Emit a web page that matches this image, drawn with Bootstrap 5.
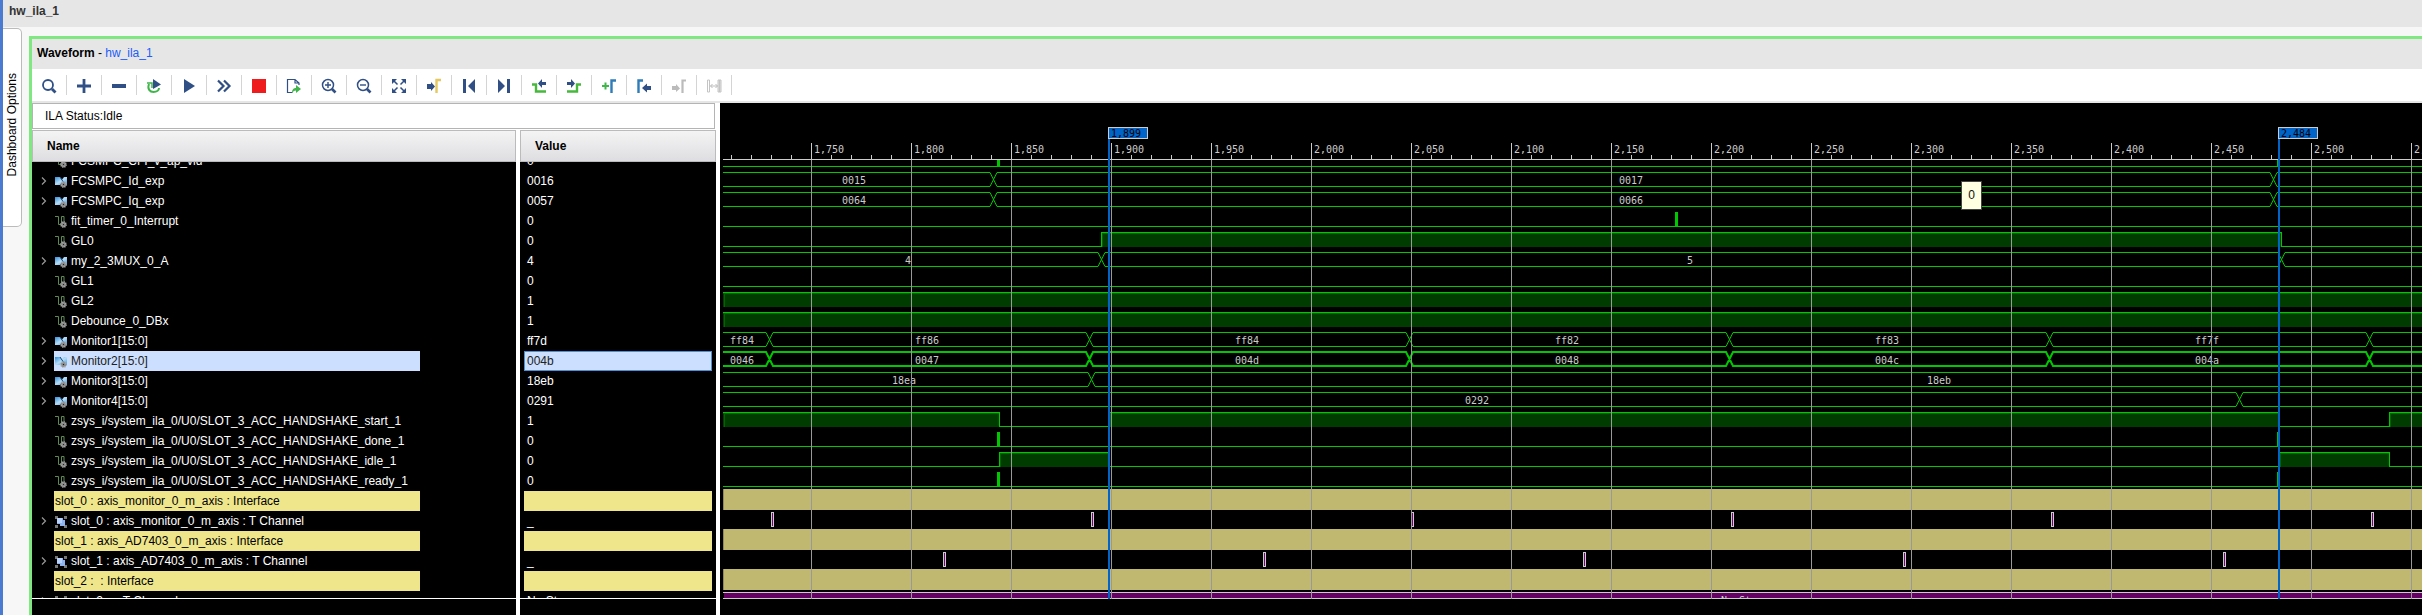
<!DOCTYPE html>
<html lang="en">
<head>
<meta charset="utf-8">
<meta name="viewport" content="width=device-width, initial-scale=1">
<title>hw_ila_1</title>
<link href="https://cdn.jsdelivr.net/npm/bootstrap@5.3.0/dist/css/bootstrap.min.css" rel="stylesheet">
<style>
  body { font: 12px/20px "Liberation Sans", Arial, sans-serif; color: #000; background: #f7f7f7; }
  .app { height: 100vh; min-height: 300px; border-left: 3px solid #4a7bd0; }
  .top-title { height: 27px; padding: 1px 6px; background: #e6e6e6; color: #333; }
  .side-strip { width: 26px; padding-top: 1px; }
  .side-tab { width: 19px; height: 199px; padding: 0; border: 1px solid #bbb; border-left: 0; border-radius: 0 5px 5px 0; background: #fff; font-size: 12px; line-height: 18px; color: #000; }
  .side-tab span { writing-mode: vertical-rl; transform: rotate(180deg); }
  .wave-window { margin-top: 9px; border: solid #80e880; border-width: 3px 0 0 3px; background: #fff; min-width: 0; }
  .window-title { height: 30px; padding: 4px 5px; background: #e6e6e6; }
  .window-title a { color: #1a5cff; }
  .tools { height: 34px; border-bottom: 2px solid #e6e6e6; }
  .tool { width: 35px; height: 20px; padding: 0; border: 0; border-right: 1px solid #d4d4d4; background: none; }
  .tool svg { width: 16px; height: 16px; }
  .signals { width: 688px; border-right: 4px solid #fff; }
  .status-box { height: 26px; margin: 0 1px 1px 0; padding: 2px 12px; border: 1px solid #b4b4b4; }
  .col-name { width: 484px; }
  .col-value { width: 196px; }
  .col-head { height: 32px; padding: 5px 14px; border: 1px solid #bbb; background: linear-gradient(#f4f4f4, #dedee2); }
  .dark { background: #000; color: #fff; }
  .rows { margin: -11px 0 0; }
  .rows li { height: 20px; display: flex; align-items: center; white-space: pre; }
  .scroll-foot { height: 17px; border-top: 1px solid #fff; }
  .expander { width: 22px; height: 20px; padding: 0 0 0 9px; border: 0; background: none; display: flex; align-items: center; }
  .label { width: 366px; height: 20px; padding-left: 1px; display: flex; align-items: center; gap: 4px; }
  .leaf { margin-left: 22px; }
  .label svg { width: 12px; height: 12px; margin-top: 1px; }
  .picked { background: #ccdfff; color: #222; }
  .group { background: #efe68c; color: #000; }
  .col-value li { margin: 0 4px; padding-left: 3px; }
  .col-value .picked { border: 1px solid #4a90d9; padding-left: 2px; }
  .plot { min-width: 0; }
  .plot svg { display: block; width: 100%; height: 100%; }
  .plot text { font: 10px "DejaVu Sans Mono", monospace; fill: #ccc; }
  .plot .flag-text { fill: #000; }
  .hint { left: 1241px; top: 78px; width: 21px; height: 29px; background: #ffffe1; border: 1px solid #444; color: #111; line-height: 26px; }
</style>
</head>
<body>
<svg width="0" height="0" class="position-absolute" aria-hidden="true">
  <defs>
    <linearGradient id="blue" x1="0" y1="0" x2="1" y2="1"><stop offset="0" stop-color="#2f8fdc"/><stop offset=".5" stop-color="#b5dcf7"/><stop offset="1" stop-color="#3a9be0"/></linearGradient>
    <symbol id="gear" viewBox="0 0 7 7"><circle cx="3.5" cy="3.5" r="2.6" fill="#777" stroke="#aaa" stroke-width="1.6" stroke-dasharray="1.2 .8"/><circle cx="3.5" cy="3.5" r="1.2" fill="#222" stroke="#ccc" stroke-width=".7"/></symbol>
    <symbol id="bus" viewBox="0 0 12 12"><path d="M0 1h5l2 2.500 2-2.500h3v8H9L7 6.500 5 9H0z" fill="url(#blue)"/><path d="M5 1l4 6" stroke="#124a80"/><use href="#gear" x="5" y="5" width="7" height="7"/></symbol>
    <symbol id="bit" viewBox="0 0 12 12"><path d="M0 .5h3.500v8h3v-8H9v5" fill="none" stroke="#5d8a50"/><use href="#gear" x="5" y="5" width="7" height="7"/></symbol>
    <symbol id="chan" viewBox="0 0 12 12"><path d="M0 0h3v3H0zM9 0h3v3H9zM0 9h3v3H0zM9 9h3v3H9z" fill="#777"/><path d="M2 2h6v2h2v6H5V8H2z" fill="#8fb4f0"/><path d="M2 2h5v5H2z" fill="#b9d2fa"/></symbol>
    <symbol id="chev" viewBox="0 0 6 8"><path d="M1 .5L4.500 4 1 7.500" fill="none" stroke="#999" stroke-width="1.200"/></symbol>
  </defs>
</svg>
<div class="app d-flex flex-column">
  <header class="top-title fw-bold flex-shrink-0">hw_ila_1</header>
  <div class="d-flex flex-fill" style="min-height:0">
    <aside class="side-strip flex-shrink-0"><button class="side-tab" type="button"><span>Dashboard Options</span></button></aside>
    <main class="wave-window d-flex flex-column flex-fill">
      <div class="window-title flex-shrink-0"><b>Waveform</b> - <a href="#" class="text-decoration-none">hw_ila_1</a></div>
      <div class="tools d-flex align-items-center flex-shrink-0" role="toolbar" aria-label="Waveform tools">
        <button class="tool" aria-label="Find"><svg viewBox="0 0 16 16" fill="none" stroke="#2f4f85"><circle cx="7" cy="7" r="5" stroke-width="1.800"/><path d="M11 11l3.500 3.500" stroke-width="2.800"/></svg></button>
        <button class="tool" aria-label="Add"><svg viewBox="0 0 16 16"><path d="M8 1v14M1 8h14" stroke="#2f4f85" stroke-width="2.800"/></svg></button>
        <button class="tool" aria-label="Remove"><svg viewBox="0 0 16 16"><path d="M1 8h14" stroke="#2f4f85" stroke-width="4"/></svg></button>
        <button class="tool" aria-label="Auto re-trigger"><svg viewBox="0 0 16 16"><path d="M7 1l8 5.500-8 4.500z" fill="#2f4f85"/><path d="M3 6C1 11 4 14 7.500 14S13 12 13 10" fill="none" stroke="#3fb54a" stroke-width="2"/><path d="M1 5h5v5" fill="none" stroke="#3fb54a" stroke-width="1.500"/></svg></button>
        <button class="tool" aria-label="Run trigger"><svg viewBox="0 0 16 16"><path d="M3 1l11 7-11 7z" fill="#2f4f85"/></svg></button>
        <button class="tool" aria-label="Run immediate"><svg viewBox="0 0 16 16"><path d="M2 2.500L7.500 8 2 13.500M8 2.500L13.500 8 8 13.500" fill="none" stroke="#2f4f85" stroke-width="2.200"/></svg></button>
        <button class="tool" aria-label="Stop"><svg viewBox="0 0 16 16"><path d="M1 1h14v14H1z" fill="#ee1c1c"/></svg></button>
        <button class="tool" aria-label="Export"><svg viewBox="0 0 16 16"><path d="M13 7V5L9 1.500H1.500v13h5M9 1.500V5h4" fill="none" stroke="#2f4f85" stroke-width="1.200"/><path d="M6 15c0-4 2-5 4-5V7l5 4-5 4v-2.500c-2 0-3 1-4 2.500z" fill="#3fb54a"/></svg></button>
        <button class="tool" aria-label="Zoom in"><svg viewBox="0 0 16 16" fill="none" stroke="#2f4f85"><circle cx="7" cy="7" r="5.500" stroke-width="1.500"/><path d="M4 7h6M7 4v6" stroke-width="1.400"/><path d="M11 11l3.500 3.500" stroke-width="2.600"/></svg></button>
        <button class="tool" aria-label="Zoom out"><svg viewBox="0 0 16 16" fill="none" stroke="#2f4f85"><circle cx="7" cy="7" r="5.500" stroke-width="1.500"/><path d="M4 7h6" stroke-width="1.400"/><path d="M11 11l3.500 3.500" stroke-width="2.600"/></svg></button>
        <button class="tool" aria-label="Zoom fit"><svg viewBox="0 0 16 16"><path d="M1 1h5L1 6zM15 1h-5l5 5zM1 15h5l-5-5zM15 15h-5l5-5z" fill="#2f4f85"/><path d="M3 3l3.500 3.500M13 3L9.500 6.500M3 13l3.500-3.500M13 13L9.500 9.500" stroke="#2f4f85" stroke-width="1.500"/></svg></button>
        <button class="tool" aria-label="Go to cursor"><svg viewBox="0 0 16 16"><path d="M1 6h4V4l4 4.500L5 13v-2H1z" fill="#2f4f85"/><path d="M10.500 15V2H15" fill="none" stroke="#e6c860" stroke-width="2.400"/></svg></button>
        <button class="tool" aria-label="Go to start"><svg viewBox="0 0 16 16"><path d="M2 1h3v14H2zM14 1v14L7 8z" fill="#2f4f85"/></svg></button>
        <button class="tool" aria-label="Go to end"><svg viewBox="0 0 16 16"><path d="M11 1h3v14h-3zM2 1v14l7-7z" fill="#2f4f85"/></svg></button>
        <button class="tool" aria-label="Previous transition"><svg viewBox="0 0 16 16"><path d="M1 6.500h4v7h10" fill="none" stroke="#46b83c" stroke-width="2.400"/><path d="M15 4h-4V1L7 5.500 11 10V7h4z" fill="#2f4f85"/></svg></button>
        <button class="tool" aria-label="Next transition"><svg viewBox="0 0 16 16"><path d="M1 13.500h10v-7h4" fill="none" stroke="#46b83c" stroke-width="2.400"/><path d="M1 4h4V1l4 4.500L5 10V7H1z" fill="#2f4f85"/></svg></button>
        <button class="tool" aria-label="Add marker"><svg viewBox="0 0 16 16"><path d="M1 8h7M4.500 4.500v7" stroke="#3fb54a" stroke-width="2"/><path d="M10.500 15V2.500H15" fill="none" stroke="#2e7cb8" stroke-width="2.400"/></svg></button>
        <button class="tool" aria-label="Previous marker"><svg viewBox="0 0 16 16"><path d="M2.500 15V2.500H7" fill="none" stroke="#2e7cb8" stroke-width="2.400"/><path d="M15 8h-4V5.500L6 10l5 4.500V12h4z" fill="#2f4f85"/></svg></button>
        <button class="tool" aria-label="Next marker" disabled><svg viewBox="0 0 16 16"><path d="M1 8h4V6l4 4.500L5 14v-2H1z" fill="#bbb"/><path d="M11.500 15V2.500H15" fill="none" stroke="#bbb" stroke-width="2.200"/></svg></button>
        <button class="tool" aria-label="Swap cursors" disabled><svg viewBox="0 0 16 16"><path d="M1.500 2h2v12h-2zM12 2h3v12h-3z" fill="none" stroke="#c4c4c4"/><path d="M12.500 2h2v12h-2z" fill="#c4c4c4"/><path d="M4.500 8h7M6.500 6l-2 2 2 2M9.500 6l2 2-2 2" fill="none" stroke="#bbb"/></svg></button>
      </div>
      <div class="d-flex flex-fill" style="min-height:0">
        <section class="signals d-flex flex-column flex-shrink-0">
          <div class="status-box flex-shrink-0">ILA Status:Idle</div>
          <div class="d-flex flex-fill gap-1" style="min-height:0">
            <div class="col-name d-flex flex-column">
              <div class="col-head fw-bold flex-shrink-0">Name</div>
              <div class="dark flex-fill overflow-hidden">
                <ul class="rows list-unstyled" id="names"></ul>
              </div>
              <div class="dark scroll-foot flex-shrink-0"></div>
            </div>
            <div class="col-value d-flex flex-column">
              <div class="col-head fw-bold flex-shrink-0">Value</div>
              <div class="dark flex-fill overflow-hidden">
                <ul class="rows list-unstyled" id="values"></ul>
              </div>
              <div class="dark scroll-foot flex-shrink-0"></div>
            </div>
          </div>
        </section>
        <section class="plot dark flex-fill position-relative overflow-hidden">
          <svg id="plot" role="img" aria-label="Waveform plot"></svg>
          <div class="hint position-absolute text-center">0</div>
        </section>
      </div>
    </main>
  </div>
</div>
<script src="https://cdn.jsdelivr.net/npm/bootstrap@5.3.0/dist/js/bootstrap.bundle.min.js"></script>
<script>
// Signals in display order: icon, name, value and trace.
// bits: list of [from, to] high spans; bus: transition positions and [x, text] labels.
const END = 4000;
const spans = (...s) => ({ bits: s });
const pulses = { bits: [], ticks: [[277, 3], [1557, 1]] };
const monitorEdges = [49, 369, 689, 1009, 1329, 1649];
const monitorText = (...t) => t.map((s, i) => [[10, 195, 515, 835, 1155, 1475][i], s]);
const hs = 'zsys_i/system_ila_0/U0/SLOT_3_ACC_HANDSHAKE_';
const signals = [
  ['bit', 'FCSMPC_CFI_v_ap_vld', '0', pulses],
  ['bus', 'FCSMPC_Id_exp', '0016', { bus: [273, 1553], text: [[122, '0015'], [899, '0017']] }],
  ['bus', 'FCSMPC_Iq_exp', '0057', { bus: [273, 1553], text: [[122, '0064'], [899, '0066']] }],
  ['bit', 'fit_timer_0_Interrupt', '0', { bits: [], ticks: [[955, 3]] }],
  ['bit', 'GL0', '0', spans([381, 1561])],
  ['bus', 'my_2_3MUX_0_A', '4', { bus: [381, 1561], text: [[185, '4'], [967, '5']] }],
  ['bit', 'GL1', '0', spans()],
  ['bit', 'GL2', '1', spans([3, END])],
  ['bit', 'Debounce_0_DBx', '1', spans([3, END])],
  ['bus', 'Monitor1[15:0]', 'ff7d', { bus: monitorEdges, text: monitorText('ff84', 'ff86', 'ff84', 'ff82', 'ff83', 'ff7f') }],
  ['bus', 'Monitor2[15:0]', '004b', { bold: true, bus: monitorEdges, text: monitorText('0046', '0047', '004d', '0048', '004c', '004a') }],
  ['bus', 'Monitor3[15:0]', '18eb', { bus: [371], text: [[172, '18ea'], [1207, '18eb']] }],
  ['bus', 'Monitor4[15:0]', '0291', { bus: [1519], text: [[745, '0292']] }],
  ['bit', hs + 'start_1', '1', spans([3, 279], [389, 1559], [1669, END])],
  ['bit', hs + 'done_1', '0', pulses],
  ['bit', hs + 'idle_1', '0', spans([279, 389], [1559, 1669])],
  ['bit', hs + 'ready_1', '0', pulses],
  ['group', 'slot_0 : axis_monitor_0_m_axis : Interface', '', { band: true }],
  ['chan', 'slot_0 : axis_monitor_0_m_axis : T Channel', '_', { beats: [51, 371, 691, 1011, 1331, 1651] }],
  ['group', 'slot_1 : axis_AD7403_0_m_axis : Interface', '', { band: true }],
  ['chan', 'slot_1 : axis_AD7403_0_m_axis : T Channel', '_', { beats: [223, 543, 863, 1183, 1503] }],
  ['group', 'slot_2 :  : Interface', '', { band: true }],
  ['chan', 'slot_2 :  : T Channel', 'No Stream', { idle: 'No Stream' }]
];

const icon = (id, w = 12, h = 12) => `<svg width="${w}" height="${h}"><use href="#${id}"/></svg>`;
document.getElementById('names').innerHTML = signals.map(([kind, name, , t]) => {
  const open = kind === 'bus' || kind === 'chan';
  const tone = kind === 'group' ? ' group' : t.bold ? ' picked' : '';
  return `<li>${open ? `<button class="expander" aria-label="Expand ${name}">${icon('chev', 6, 8)}</button>` : ''}` +
    `<span class="label${open ? '' : ' leaf'}${tone}">${kind === 'group' ? '' : icon(kind)}<span>${name}</span></span></li>`;
}).join('');
document.getElementById('values').innerHTML = signals.map(([kind, , value, t]) =>
  `<li class="${kind === 'group' ? 'group' : t.bold ? 'picked' : ''}">${value}</li>`).join('');

const rect = (x, y, w, h, fill) => `<rect x="${x}" y="${y}" width="${w}" height="${h}" fill="${fill}"/>`;
const G = '#00c800', INK = '#ccc';
let out = '';
signals.forEach(([, , , t], i) => {
  const top = 48 + i * 20, hi = top + 1, lo = top + 15;
  if (t.bits) {
    let x = 3;
    t.bits.forEach(([a, b]) => {
      if (a > x) out += rect(x, lo, a - x, 1, G);
      out += rect(a, hi, b - a, 15, '#003c00') + rect(a, hi + 1, b - a, 1, '#006400') + rect(a + 1, hi + 1, 1, 14, '#006400') + rect(a, hi, b - a, 1, G);
      if (a > 3) out += rect(a, hi, 1, 15, G);
      out += rect(b, hi, 1, 15, G);
      x = b;
    });
    if (x < END) out += rect(x, lo, END - x, 1, G);
    (t.ticks || []).forEach(([a, w]) => out += rect(a, hi, w, 15, G));
  }
  if (t.bus) {
    const w = t.bold ? 2 : 1;
    const y1 = hi + (t.bold ? 0 : .5), y2 = lo + (t.bold ? 0 : .5);
    let up = `M3 ${y1}`, down = `M3 ${y2}`, flip = false;
    t.bus.forEach(c => {
      const [a, b] = flip ? [y2, y1] : [y1, y2];
      up += `H${c - 3}L${c + 4} ${b}`; down += `H${c - 3}L${c + 4} ${a}`; flip = !flip;
    });
    out += `<path d="${up}H${END}${down}H${END}" fill="none" stroke="${G}" stroke-width="${w}"/>`;
  }
  (t.text || []).forEach(([x, s]) => out += `<text x="${x}" y="${top + 13}">${s}</text>`);
  if (t.band) out += rect(3, top - 2, END, 21, '#c0b870') + rect(3, top - 2, 1, 21, '#908a54');
  (t.beats || []).forEach(x => out += rect(x, hi, 3, 15, INK) + rect(x + 1, hi + 1, 1, 13, '#780078'));
  // Only the top of the last row is in view.
  if (t.idle) out += rect(3, hi, END, 1, INK) + rect(4, hi + 1, END, 5, '#640064') +
    `<text x="1001" y="${top + 13}">${t.idle}</text>` + rect(0, hi + 6, END, 400, '#000') + rect(3, hi + 6, END, 1, INK);
});
// The ruler covers the part of the first row that is scrolled under it.
out += rect(0, 0, END, 57, '#000') + rect(3, 56, END, 1, INK);
for (let x = 11, n = 1710; x < END; x += 20, n += 10) {
  if (n % 50) { out += rect(x, 52, 1, 4, INK); continue; }
  out += rect(x, 40, 1, 16, INK) + rect(x, 57, 1, 439, '#999') + `<text x="${x + 3}" y="50">${n.toLocaleString('en-US')}</text>`;
}
[[388, '1,899'], [1558, '2,484']].forEach(([x, s]) => {
  out += rect(x, 36, 2, 460, '#0064c8') + `<rect x="${x + .5}" y="24.5" width="39" height="11" fill="#0064c8" stroke="#ccc"/><text class="flag-text" x="${x + 3}" y="34">${s}</text>`;
});
document.getElementById('plot').innerHTML = out;
</script>
</body>
</html>
